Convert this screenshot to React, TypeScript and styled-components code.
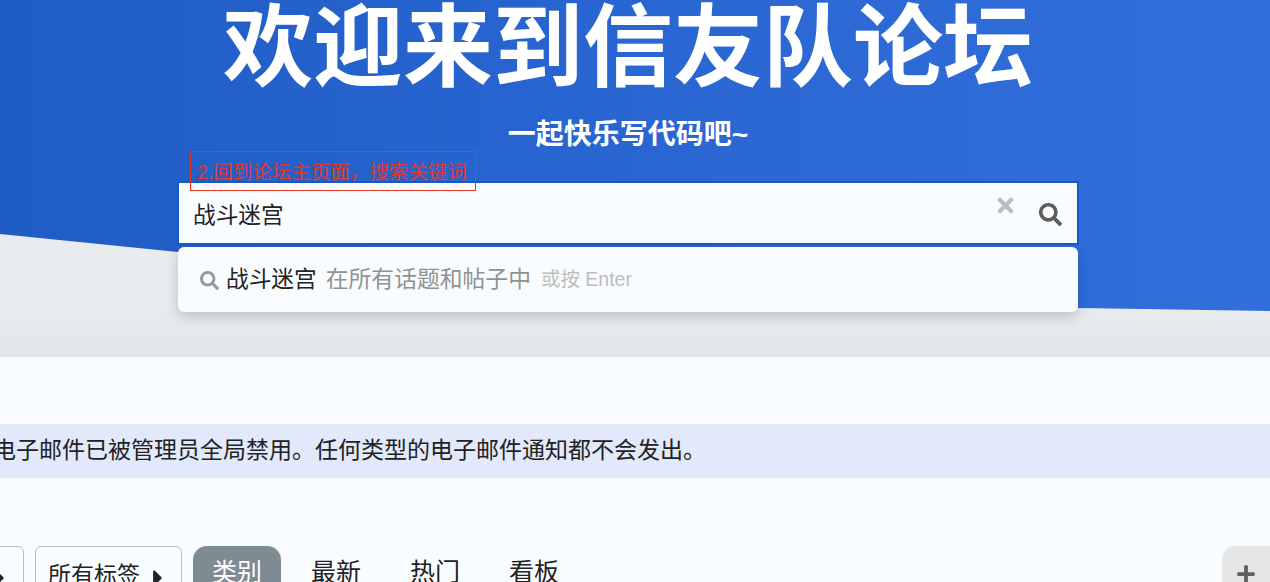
import React from "react";
import styled, { createGlobalStyle } from "styled-components";
import { FaSearch, FaTimes, FaCaretRight, FaPlus } from "react-icons/fa";

const cjk = `"Liberation Sans", "Noto Sans CJK SC", sans-serif`;

const GlobalStyle = createGlobalStyle`
  html, body {
    margin: 0;
    height: 582px;
    overflow: hidden;
    background: #f9fcff;
    font-family: ${cjk};
  }
  * { box-sizing: border-box; }
`;

const Page = styled.div`
  width: 1270px;
  height: 582px;
  overflow: hidden;
  display: flex;
  flex-direction: column;
`;

const Hero = styled.header`
  position: relative;
  flex: none;
  height: 357px;
  background: linear-gradient(180deg, #e9ecef 0%, #e9ecef 85%, #e3e6e9 100%);
  display: flex;
  flex-direction: column;
  align-items: center;
  padding-right: 14px;
`;

const HeroWave = styled.div`
  position: absolute;
  inset: 0;
  background: linear-gradient(90deg, #1f5cc4 0%, #2a66d2 50%, #316fdc 100%);
  clip-path: polygon(0 0, 100% 0, 100% 311px, 1078px 308px, 600px 284px, 178px 252px, 0 234px);
`;

const HeroTitle = styled.h1`
  position: relative;
  margin: 2px 0 0;
  font-size: 90px;
  line-height: 92px;
  font-weight: 700;
  color: #fff;
  white-space: nowrap;
`;

const HeroSubtitle = styled.h2`
  position: relative;
  margin: 23px 0 0;
  font-size: 28px;
  line-height: 36px;
  font-weight: 700;
  color: #fff;
  white-space: nowrap;
`;

const SearchArea = styled.div`
  position: relative;
  width: 900px;
  margin-top: 28px;
`;

const Annotation = styled.div`
  position: absolute;
  left: 12px;
  top: -30px;
  width: 286px;
  height: 40px;
  padding: 7px 0 0 6px;
  border: 1px solid #e5361f;
  color: #e5361f;
  font-size: 19.5px;
  line-height: 26px;
  white-space: nowrap;
  z-index: 2;
`;

const SearchBox = styled.div`
  height: 64px;
  margin: 0 -1px;
  background: #f9fcff;
  border: 2px solid #1a58c4;
  display: flex;
  align-items: center;
  padding: 0 15px 0 14px;
  font-size: 22.7px;
  color: #222;
`;

const SearchValue = styled.span`
  flex: 1;
`;

const ClearIcon = styled(FaTimes)`
  width: 21px;
  height: 23px;
  color: #bdbdbd;
  margin: -15px 23px 0 0;
`;

const SearchIcon = styled(FaSearch)`
  width: 23px;
  height: 23px;
  margin-top: 2px;
  color: #5c5c5c;
`;

const Dropdown = styled.div`
  height: 65px;
  margin-top: 2px;
  padding: 0 22px 5px;
  background: #f9fcff;
  border-radius: 6px;
  box-shadow: 0 4px 14px rgba(0, 0, 0, 0.2);
  display: flex;
  align-items: center;
  font-size: 22.7px;
  color: #222;
  white-space: nowrap;
`;

const ResultIcon = styled(FaSearch)`
  width: 19px;
  height: 19px;
  color: #999;
  margin: 7px 7px 0 0;
`;

const ResultScope = styled.span`
  margin-left: 9px;
  font-size: 22.8px;
  color: #919191;
`;

const ResultHint = styled.span`
  margin-left: 10px;
  font-size: 19.5px;
  color: #bdbdbd;
`;

const Notice = styled.div`
  flex: none;
  height: 54px;
  margin-top: 67px;
  background: #e1e9fa;
  color: #222;
  font-size: 23px;
  line-height: 52px;
  white-space: nowrap;
  padding-left: 0;
  text-indent: -7px;
`;

const NavBar = styled.nav`
  flex: none;
  margin-top: 68px;
  display: flex;
  align-items: flex-start;
  height: 60px;
  margin-left: -123px;
`;

const Filter = styled.div`
  height: 60px;
  padding: 12px 18px 0 12px;
  margin-right: 11px;
  border: 1px solid #b8bcc0;
  border-radius: 6px;
  display: flex;
  align-items: flex-start;
  gap: 13px;
  font-size: 23px;
  line-height: 32px;
  color: #222;
  white-space: nowrap;
`;

const Caret = styled(FaCaretRight)`
  width: 10px;
  height: 26px;
  margin-top: 6px;
  color: #222;
`;

const NavItem = styled.a<{ $active?: boolean }>`
  height: 60px;
  padding: 10px 19px 0;
  margin-right: 11px;
  border-radius: 14px 14px 0 0;
  font-size: 25px;
  line-height: 32px;
  color: ${({ $active }) => ($active ? "#fff" : "#222")};
  background: ${({ $active }) => ($active ? "#7f8b93" : "transparent")};
  white-space: nowrap;
`;

const NewButton = styled.button`
  margin-left: auto;
  width: 48px;
  height: 60px;
  padding: 12px 0 0;
  border: none;
  border-radius: 14px 0 0 0;
  background: #e6e6e6;
  color: #5f5f5f;
  display: flex;
  justify-content: center;
  align-items: flex-start;
`;

const PlusIcon = styled(FaPlus)`
  width: 20px;
  height: 20px;
  margin-top: 6px;
`;

export default function App() {
  return (
    <Page>
      <GlobalStyle />
      <Hero>
        <HeroWave />
        <HeroTitle>欢迎来到信友队论坛</HeroTitle>
        <HeroSubtitle>一起快乐写代码吧~</HeroSubtitle>
        <SearchArea>
          <Annotation>2.回到论坛主页面，搜索关键词</Annotation>
          <SearchBox>
            <SearchValue>战斗迷宫</SearchValue>
            <ClearIcon />
            <SearchIcon />
          </SearchBox>
          <Dropdown>
            <ResultIcon />
            战斗迷宫
            <ResultScope>在所有话题和帖子中</ResultScope>
            <ResultHint>或按 Enter</ResultHint>
          </Dropdown>
        </SearchArea>
      </Hero>
      <Notice>电子邮件已被管理员全局禁用。任何类型的电子邮件通知都不会发出。</Notice>
      <NavBar>
        <Filter>所有类别<Caret /></Filter>
        <Filter>所有标签<Caret /></Filter>
        <NavItem $active>类别</NavItem>
        <NavItem>最新</NavItem>
        <NavItem>热门</NavItem>
        <NavItem>看板</NavItem>
        <NewButton><PlusIcon /></NewButton>
      </NavBar>
    </Page>
  );
}
